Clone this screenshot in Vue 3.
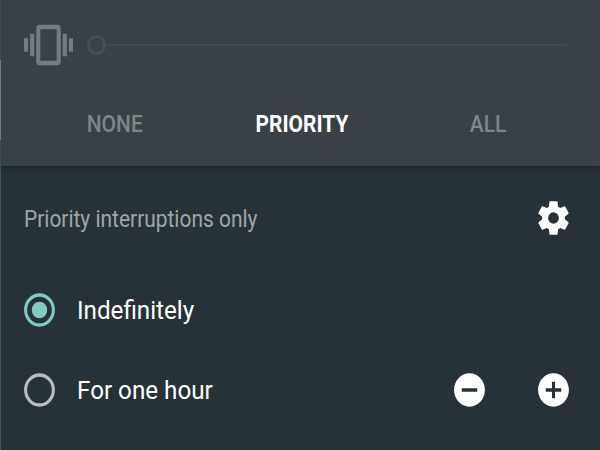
<template>
    <div class="volume-panel">
        <!-- Volumen y modo de interrupciones -->
        <header class="panel-header">
            <div class="slider-row">
                <svg class="icon-vibrate" viewBox="0 0 24 24" preserveAspectRatio="none">
                    <path
                        d="M0 15h2V9H0v6zm3 2h2V7H3v10zm19-8v6h2V9h-2zm-3 8h2V7h-2v10zM16.5 3h-9C6.67 3 6 3.67 6 4.5v15c0 .83.67 1.5 1.5 1.5h9c.83 0 1.5-.67 1.5-1.5v-15c0-.83-.67-1.5-1.5-1.5zM16 19H8V5h8v14z" />
                </svg>
                <div class="slider">
                    <span class="thumb"></span>
                    <span class="track"></span>
                </div>
            </div>
            <nav class="modes">
                <button v-for="mode in modes" :key="mode" class="mode" :class="{ active: mode === currentMode }"
                    @click="currentMode = mode">
                    <span class="label">{{ mode }}</span>
                </button>
            </nav>
        </header>

        <section class="panel-body">
            <div class="row summary">
                <span class="label summary-text">Priority interruptions only</span>
                <svg class="icon" viewBox="0 0 24 24" preserveAspectRatio="none">
                    <circle class="gear-ring" cx="12" cy="12" r="5.45" />
                    <path v-for="angle in teeth" :key="angle" :transform="`rotate(${angle} 12 12)`"
                        d="M9.7 2h4.6l.3.3.6 4.2H8.8l.6-4.2z" />
                </svg>
            </div>

            <div v-for="option in options" :key="option.id" class="row option" @click="selected = option.id">
                <svg class="icon radio" :class="{ checked: selected === option.id }" viewBox="0 0 24 24"
                    preserveAspectRatio="none">
                    <circle class="ring" cx="12" cy="12" r="9" />
                    <circle v-if="selected === option.id" class="dot" cx="12" cy="12" r="5" />
                </svg>
                <span class="label option-text">{{ option.text }}</span>
                <div v-if="option.adjustable" class="stepper">
                    <svg class="icon" viewBox="0 0 24 24" preserveAspectRatio="none">
                        <path
                            d="M12 2C6.48 2 2 6.48 2 12s4.48 10 10 10 10-4.48 10-10S17.52 2 12 2zm5 11H7v-2h10v2z" />
                    </svg>
                    <svg class="icon" viewBox="0 0 24 24" preserveAspectRatio="none">
                        <path
                            d="M12 2C6.48 2 2 6.48 2 12s4.48 10 10 10 10-4.48 10-10S17.52 2 12 2zm5 11h-4v4h-2v-4H7v-2h4V7h2v4h4v2z" />
                    </svg>
                </div>
            </div>
        </section>
    </div>
</template>

<script setup>
    import { ref } from 'vue'

    const modes = ['NONE', 'PRIORITY', 'ALL']
    const currentMode = ref('PRIORITY')

    const options = [
        { id: 'forever', text: 'Indefinitely', adjustable: false },
        { id: 'hour', text: 'For one hour', adjustable: true }
    ]
    const selected = ref('forever')

    // Dientes del engranaje, en grados
    const teeth = [0, 60, 120, 180, 240, 300]
</script>

<style>
    body {
        margin: 0;
        background: #263238;
    }
</style>

<style scoped>
    .volume-panel {
        box-sizing: border-box;
        width: 600px;
        height: 450px;
        overflow: hidden;
        background: linear-gradient(#3a5a5f, #3a5a5f) 0 0 / 1px 100% no-repeat #263238;
        font-family: Roboto, sans-serif;
        color: #fff;
    }

    .panel-header {
        box-sizing: border-box;
        height: 166px;
        padding-top: 18px;
        /* borde izquierdo con un tramo más claro */
        background: linear-gradient(#334e54 60px, #727b80 60px, #727b80 140px, #334e54 140px) 0 0 / 1px 100% no-repeat #394147;
        box-shadow: 0 1px 6px rgba(0, 0, 0, 0.4);
    }

    .slider-row {
        display: flex;
        align-items: center;
        height: 54.5px;
        padding: 0 34px 0 24px;
    }

    .icon-vibrate {
        flex: none;
        width: 49px;
        height: 54px;
        fill: #747c81;
    }

    .slider {
        display: flex;
        align-items: center;
        flex: 1;
        margin-left: 14px;
    }

    .thumb {
        box-sizing: border-box;
        width: 19px;
        height: 20px;
        border: 3px solid #474f55;
        border-radius: 50%;
    }

    .track {
        flex: 1;
        height: 2px;
        background: #42494f;
    }

    .modes {
        display: flex;
        height: 93px;
        padding: 0 19px 0 22px;
    }

    .mode {
        flex: 1;
        height: 93px;
        padding: 0;
        border: 0;
        background: none;
        font: 500 23px/103px Roboto, sans-serif;
        color: #7d868a;
    }

    .mode.active {
        font-weight: 700;
        color: #fff;
    }

    .label {
        display: inline-block;
        white-space: nowrap;
        transform: scaleX(0.91);
    }

    .row {
        display: flex;
        align-items: center;
        height: 80px;
        padding: 0 28px 0 21px;
    }

    .panel-body {
        padding-top: 12px;
    }

    .summary {
        justify-content: space-between;
        padding-left: 24px;
        margin-bottom: 11.5px;
    }

    .summary-text {
        margin-top: 2px;
        font-size: 23px;
        color: #a1a5a8;
        transform-origin: left center;
    }

    .option-text {
        margin-left: 19px;
        font-size: 26.5px;
        transform: scaleX(0.913);
        transform-origin: left center;
    }

    .icon {
        flex: none;
        width: 37px;
        height: 40px;
        fill: #fff;
    }

    .summary .icon {
        margin-bottom: 1px;
    }

    .gear-ring {
        fill: none;
        stroke: #fff;
        stroke-width: 3.9;
    }

    .radio .ring {
        fill: none;
        stroke: #babdbf;
        stroke-width: 2;
    }

    .radio.checked .ring {
        stroke: #80cbc4;
    }

    .radio .dot {
        fill: #80cbc4;
    }

    .stepper {
        display: flex;
        gap: 47px;
        margin-left: auto;
    }
</style>
